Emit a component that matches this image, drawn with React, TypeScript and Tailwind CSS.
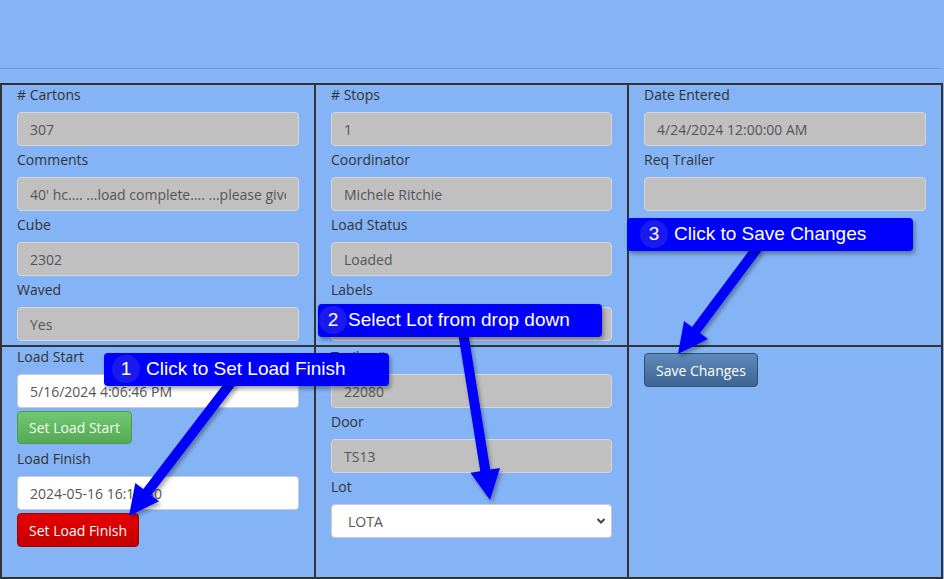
import React from 'react';

type Field = { label: string; value: string; white?: boolean };

const arrowPoints = (x1: number, y1: number, x2: number, y2: number, shaft = 10, headLen = 30, headW = 30) => {
  const dx = x2 - x1;
  const dy = y2 - y1;
  const len = Math.hypot(dx, dy);
  const ux = dx / len;
  const uy = dy / len;
  const px = -uy;
  const py = ux;
  const bx = x2 - ux * headLen;
  const by = y2 - uy * headLen;
  const pts = [
    [x1 + (px * shaft) / 2, y1 + (py * shaft) / 2],
    [bx + (px * shaft) / 2, by + (py * shaft) / 2],
    [bx + (px * headW) / 2, by + (py * headW) / 2],
    [x2, y2],
    [bx - (px * headW) / 2, by - (py * headW) / 2],
    [bx - (px * shaft) / 2, by - (py * shaft) / 2],
    [x1 - (px * shaft) / 2, y1 - (py * shaft) / 2],
  ];
  return pts.map(p => p.map(n => n.toFixed(1)).join(',')).join(' ');
};

const Label = ({ children }: { children: React.ReactNode }) => (
  <div className="h-5 leading-5 mb-[7px] text-[14px] text-[#333]">{children}</div>
);

const TextBox = ({ value, white }: { value: string; white?: boolean }) => (
  <input
    readOnly
    value={value}
    className={`block w-full h-[34px] px-3 rounded-[4px] border text-[14px] text-[#555] outline-none ${
      white ? 'bg-white border-[#ccc]' : 'bg-[#c0c0c0] border-[#d6d6d6]'
    }`}
  />
);

const FieldBlock = ({ f }: { f: Field }) => (
  <div className="mb-1">
    <Label>{f.label}</Label>
    <TextBox value={f.value} white={f.white} />
  </div>
);

const col1: Field[] = [
  { label: '# Cartons', value: '307' },
  { label: 'Comments', value: "40' hc.... ...load complete.... ...please give priority" },
  { label: 'Cube', value: '2302' },
  { label: 'Waved', value: 'Yes' },
];

const col2: Field[] = [
  { label: '# Stops', value: '1' },
  { label: 'Coordinator', value: 'Michele Ritchie' },
  { label: 'Load Status', value: 'Loaded' },
  { label: 'Labels', value: '' },
];

const col3: Field[] = [
  { label: 'Date Entered', value: '4/24/2024 12:00:00 AM' },
  { label: 'Req Trailer', value: '' },
];

const Callout = ({ n, text, left, top, width, circleLeft, textLeft }: { n: number; text: string; left: number; top: number; width: number; circleLeft: number; textLeft: number }) => (
  <div
    className="absolute h-[33px] bg-[#0000ff] rounded-[4px] shadow-[2px_3px_4px_rgba(0,0,0,0.35)] font-['Liberation_Sans',Arial,sans-serif] text-white text-[19px]"
    style={{ left, top, width }}
  >
    <div
      className="absolute top-[2px] w-[28px] h-[28px] rounded-full bg-[#1a1aee] flex items-center justify-center text-[19px]"
      style={{ left: circleLeft }}
    >
      {n}
    </div>
    <div className="absolute top-0 h-[33px] flex items-center whitespace-nowrap" style={{ left: textLeft }}>
      {text}
    </div>
  </div>
);

export default function App() {
  return (
    <div className="relative w-[944px] h-[579px] overflow-hidden bg-[#85b4f6] font-['Open_Sans','Liberation_Sans',sans-serif]">
      <div className="h-[68px]" />
      <div className="h-px w-[942px] bg-[#6f9bd8]" />
      <div className="h-[14px]" />

      <div className="grid grid-cols-[314px_313px_314px] w-[943px] border-l-2 border-t-2 border-[#333]">
        {/* row 1 */}
        <div className="h-[262px] px-[15px] border-r-2 border-b-2 border-[#333]">
          {col1.map(f => <FieldBlock key={f.label} f={f} />)}
        </div>
        <div className="h-[262px] px-[15px] border-r-2 border-b-2 border-[#333]">
          {col2.map(f => <FieldBlock key={f.label} f={f} />)}
        </div>
        <div className="h-[262px] px-[15px] border-r-2 border-b-2 border-[#333]">
          {col3.map(f => <FieldBlock key={f.label} f={f} />)}
        </div>

        {/* row 2 */}
        <div className="h-[232px] px-[15px] border-r-2 border-b-2 border-[#333]">
          <Label>Load Start</Label>
          <TextBox value="5/16/2024 4:06:46 PM" white />
          <button className="mt-[3px] h-[33px] px-[11px] rounded-[4px] border border-[#4b9d4b] bg-gradient-to-b from-[#72c872] to-[#55a955] text-[14px] text-[#f2fff2]">
            Set Load Start
          </button>
          <div className="mt-[5px]">
            <Label>Load Finish</Label>
            <TextBox value="2024-05-16 16:17:30" white />
          </div>
          <button className="mt-[3px] h-[34px] px-[11px] rounded-[4px] border border-[#a50000] bg-gradient-to-b from-[#e80000] to-[#c20000] text-[14px] text-white">
            Set Load Finish
          </button>
        </div>
        <div className="h-[232px] px-[15px] border-r-2 border-b-2 border-[#333]">
          <FieldBlock f={{ label: 'Trailer #', value: '22080' }} />
          <FieldBlock f={{ label: 'Door', value: 'TS13' }} />
          <Label>Lot</Label>
          <div className="relative">
            <select
              defaultValue="LOTA"
              className="block w-full h-[34px] pl-4 pr-8 appearance-none rounded-[4px] border border-[#ccc] bg-white text-[14px] text-[#555] outline-none"
            >
              <option>LOTA</option>
              <option>LOTB</option>
            </select>
            <svg className="absolute right-[6px] top-[13px] pointer-events-none" width="10" height="8" viewBox="0 0 10 8">
              <path d="M1.5 2 L5 5.5 L8.5 2" fill="none" stroke="#444" strokeWidth="2" />
            </svg>
          </div>
        </div>
        <div className="h-[232px] px-[15px] pt-[6px] border-r-2 border-b-2 border-[#333]">
          <button className="h-[34px] px-[11px] rounded-[4px] border border-[#2f5075] bg-gradient-to-b from-[#5f8abb] to-[#3d6491] text-[14px] text-white">
            Save Changes
          </button>
        </div>
      </div>

      {/* arrows */}
      <svg className="absolute left-0 top-0 pointer-events-none" width="944" height="579">
        <defs>
          <filter id="sh" x="-20%" y="-20%" width="140%" height="140%">
            <feDropShadow dx="2" dy="3" stdDeviation="2" floodColor="#000" floodOpacity="0.35" />
          </filter>
        </defs>
        <g fill="#0000ff" filter="url(#sh)">
          <polygon points={arrowPoints(233, 380, 129, 516)} />
          <polygon points={arrowPoints(463, 332, 490, 500)} />
          <polygon points={arrowPoints(758, 247, 678, 354)} />
        </g>
      </svg>

      <Callout n={1} text="Click to Set Load Finish" left={104} top={353} width={285} circleLeft={8} textLeft={42} />
      <Callout n={2} text="Select Lot from drop down" left={318} top={304} width={284} circleLeft={1} textLeft={30} />
      <Callout n={3} text="Click to Save Changes" left={627} top={218} width={286} circleLeft={13} textLeft={47} />
    </div>
  );
}
